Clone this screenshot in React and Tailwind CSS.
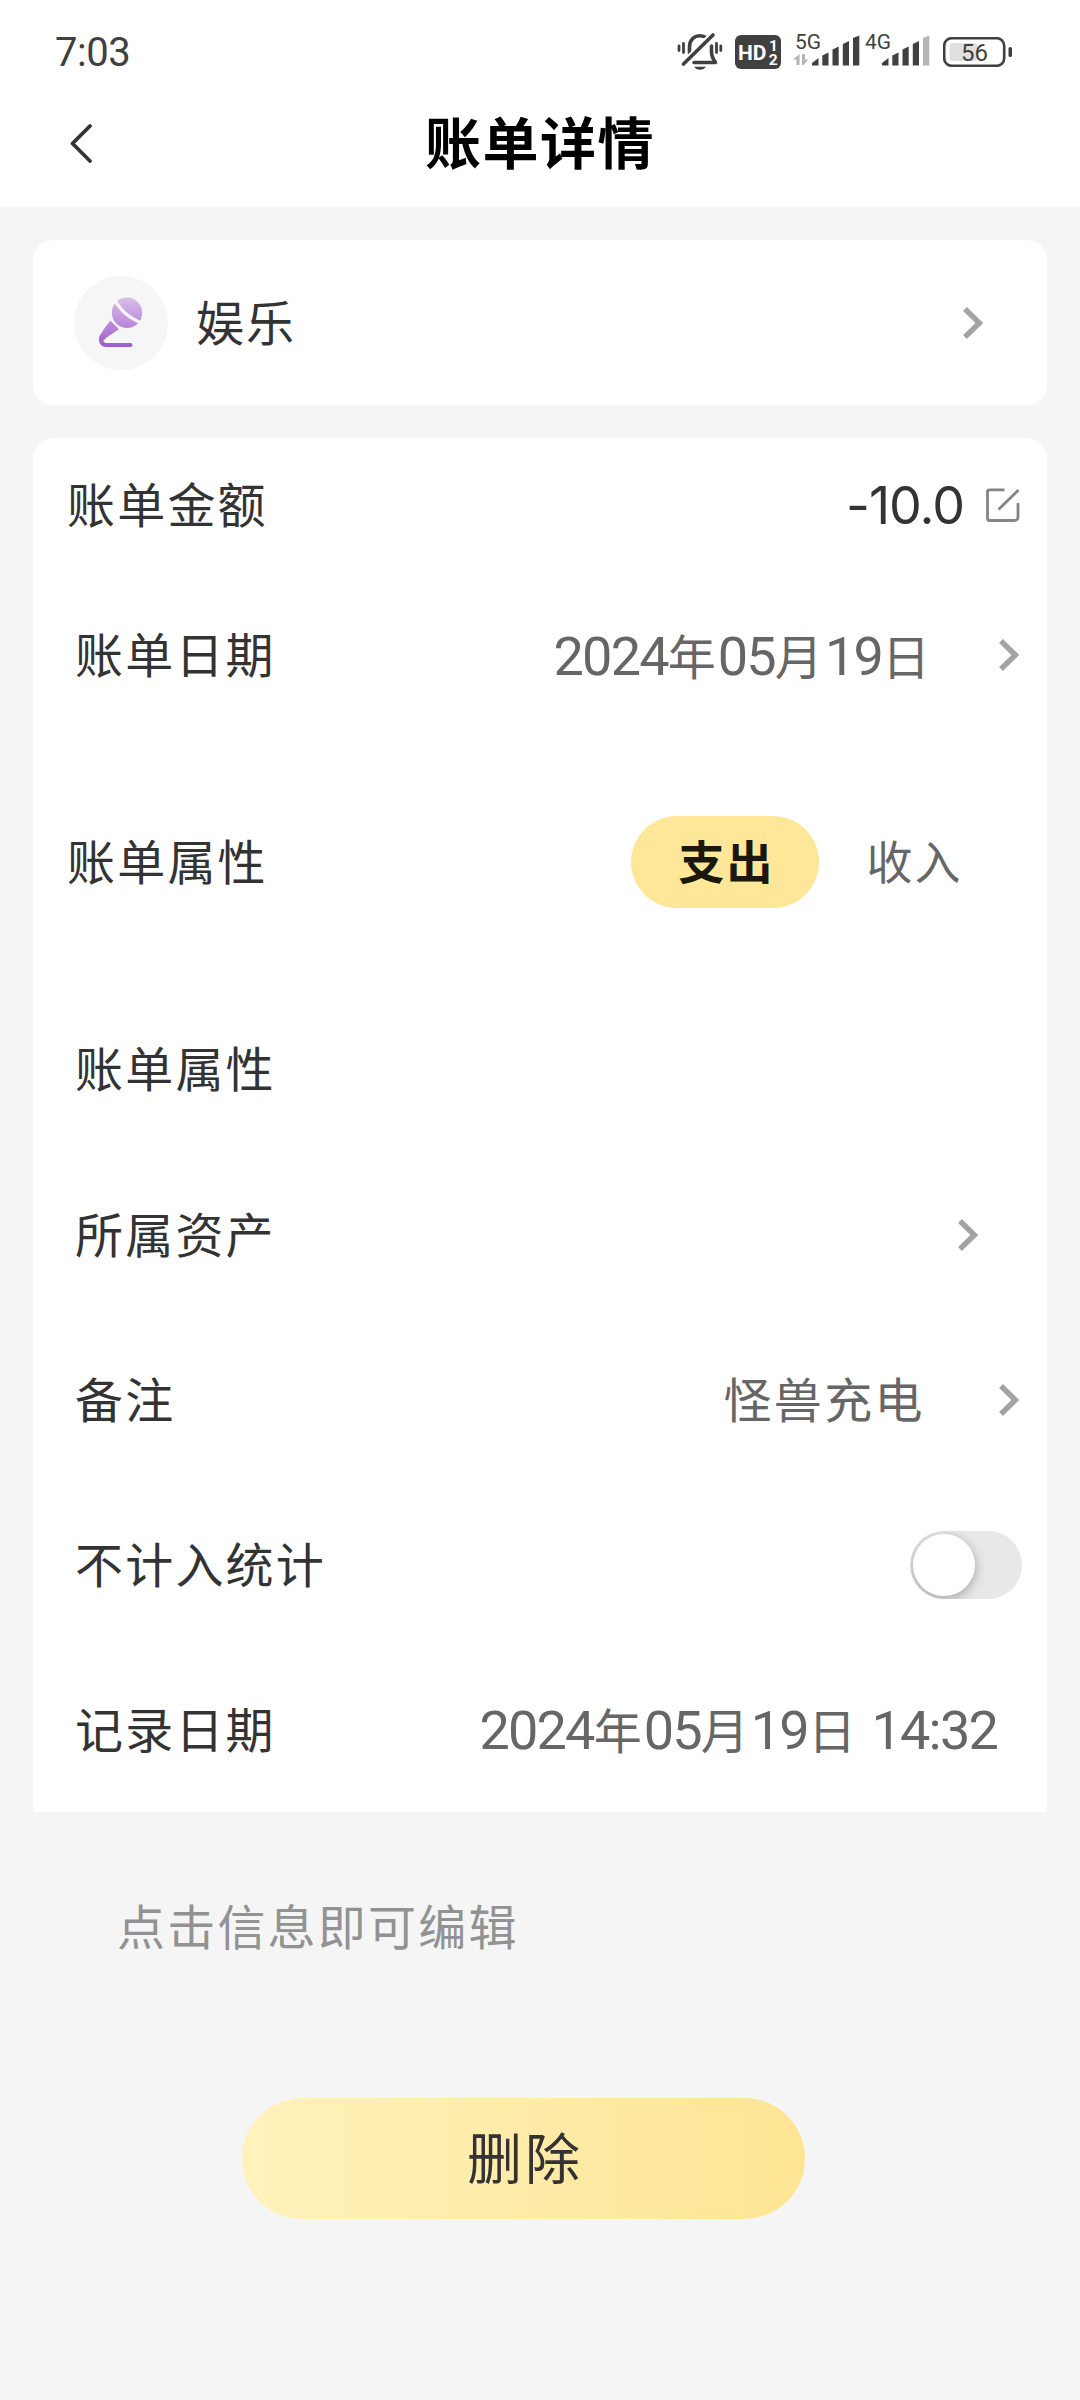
import { useState } from "react";

const NumText = ({ children, className = "" }) => (
    <span className={`font-['Roboto','Noto_Sans_CJK_SC',sans-serif] text-[54px] tracking-[-1.8px] ${className}`}>
        {children}
    </span>
);

const DateText = ({ year, month, day, time }) => (
    <span className="flex items-baseline whitespace-pre pt-[3px] leading-none text-[#666666]">
        <NumText>{year}</NumText>
        <span>年</span>
        <NumText>{month}</NumText>
        <span>月</span>
        <NumText>{day}</NumText>
        <span>日</span>
        {time && <NumText className="pl-[2px]">{` ${time}`}</NumText>}
    </span>
);

const Chevron = ({ className = "" }) => (
    <svg className={`h-8 w-5 shrink-0 ${className}`} viewBox="0 0 20 32" fill="none">
        <path d="M2 2 L16.300 16 L2 30" stroke="#a3a3a3" strokeWidth="5.400" />
    </svg>
);

const EditIcon = () => (
    <svg className="h-[34px] w-[34px] shrink-0" viewBox="0 0 34 34" fill="none" stroke="#858585" strokeWidth="2.800">
        <path d="M18.500 1.800 H3.500 Q1.500 1.800 1.500 3.800 V30.500 Q1.500 32.500 3.500 32.500 H28 Q32 32.500 32 28.500 V15" />
        <path d="M12.500 21.500 L32.500 2" />
    </svg>
);

const MicIcon = () => (
    <svg className="h-[94px] w-[94px] shrink-0" viewBox="0 0 94 94" fill="none">
        <defs>
            <linearGradient id="mic" x1="0" y1="21" x2="0" y2="71" gradientUnits="userSpaceOnUse">
                <stop offset="0" stopColor="#d9bfe9" />
                <stop offset="0.5" stopColor="#be8fdc" />
                <stop offset="1" stopColor="#a05cc6" />
            </linearGradient>
        </defs>
        <circle cx="47" cy="47" r="47" fill="#f6f6f7" />
        <circle cx="53" cy="36.800" r="15.200" fill="url(#mic)" />
        <path d="M41 24 Q49 40 69 47.500" stroke="#f6f6f7" strokeWidth="3.200" />
        <path d="M36.500 44.500 L45 53.300 L32.500 61.500 L28 66 L25.300 62.500 Q26 57 36.500 44.500 Z" fill="url(#mic)" />
        <path d="M27.600 60 C25.500 64.500 28 69 32.500 69 H56.500" stroke="url(#mic)" strokeWidth="4" strokeLinecap="round" />
    </svg>
);

const MutedBell = () => (
    <svg className="h-[40px] w-[46px]" viewBox="0 0 46 40" fill="none" stroke="#404040" strokeWidth="3.600" strokeLinecap="round">
        <path d="M12.500 21 V15 C12.500 8 17 3.800 23 3.800 C26 3.800 28 4.600 30 6" />
        <path d="M34.500 14 V20 C34.500 25 36 27 38.500 30.500 H17" strokeLinejoin="round" />
        <path d="M36 3 L7 32" stroke="#ffffff" strokeWidth="8" strokeLinecap="butt" />
        <path d="M36 3 L6.500 32" />
        <path d="M17 34.800 H29 Q27 37.800 23 37.800 Q19 37.800 17 34.800 Z" fill="#404040" stroke="none" />
        <path d="M6.500 11.500 V20.500 M2 14 V18.500 M39.500 11.500 V20.500 M43.800 14 V18.500" strokeWidth="2.800" />
    </svg>
);

const SignalBars = ({ label, weak, data }) => (
    <svg className="h-[48px] w-[68px]" viewBox="0 -4 68 48" fill="#404040">
        <text x="2" y="17.200" fontSize="21" fontFamily="Roboto, sans-serif">{label}</text>
        {data && <path d="M0 27.500 L6.500 22 V33 H3.500 V27.500 Z M9 22 H12 V27.500 H15.500 L10.500 33 H9 Z" fill="#b5b5b5" />}
        <path d="M19 33.500 V31 L25.500 26 V33.500 Z" />
        <path d="M29.300 33.500 V23.500 L35.500 20.500 V33.500 Z" />
        <path d="M39.500 33.500 V17.500 L45.700 14.500 V33.500 Z" />
        <path d="M49.800 33.500 V12 L56 9 V33.500 Z" />
        <path d="M60 33.500 V6 L66.300 3.500 V33.500 Z" fill={weak ? "#b5b5b5" : "#404040"} />
    </svg>
);

const HdBadge = () => (
    <svg className="h-[34px] w-[46px]" viewBox="0 0 46 34" fill="#ffffff" fontFamily="Roboto, sans-serif" fontWeight="700">
        <rect width="46" height="34" rx="6" fill="#404040" />
        <text x="3" y="24.500" fontSize="21">HD</text>
        <text x="34" y="16" fontSize="15.500">1</text>
        <text x="33.800" y="30" fontSize="15.500">2</text>
    </svg>
);

const Battery = ({ level }) => (
    <svg className="h-[30px] w-[70px]" viewBox="0 0 70 30" fill="none">
        <rect x="1.200" y="1.200" width="60" height="27.600" rx="7.500" stroke="#404040" strokeWidth="2.600" />
        <rect x="6.500" y="6" width="28" height="18" rx="3" fill="#e0e0e0" />
        <rect x="65.500" y="10" width="3.500" height="10" rx="1.500" fill="#404040" />
        <text x="18" y="23.500" fontSize="24" fontFamily="Roboto, sans-serif" fill="#404040">{level}</text>
    </svg>
);

const StatusBar = () => (
    <div className="flex h-[104px] items-center pl-[55px] tracking-normal text-[#404040]">
        <span className="pt-[2px] font-['Roboto',sans-serif] text-[40px] leading-none tracking-[-0.5px]">7:03</span>
        <div className="ml-auto flex items-center pr-[67px]">
            <MutedBell />
            <div className="ml-[12px]"><HdBadge /></div>
            <div className="ml-[12px]"><SignalBars label="5G" data /></div>
            <div className="ml-[2px]"><SignalBars label="4G" weak /></div>
            <div className="ml-[12px]"><Battery level="56" /></div>
        </div>
    </div>
);

const Row = ({ label, indent, height = "h-[165px]", right = "pr-[28px]", children }) => (
    <div className={`flex items-center ${height} ${right} ${indent ? "pl-[42px]" : "pl-[34px]"}`}>
        <span className="pb-[6px] leading-none tracking-[2.2px]">{label}</span>
        <div className="ml-auto flex items-center">{children}</div>
    </div>
);

const App = () => {
    const [type, setType] = useState("支出");
    const [excluded, setExcluded] = useState(false);

    return (
        <div className="h-[2400px] w-[1080px] overflow-hidden bg-[#f5f5f5] font-['Noto_Sans_CJK_SC',sans-serif] text-[48px] tracking-[2px] text-[#333333]">
            <header className="h-[207px] bg-white">
                <StatusBar />
                <div className="grid h-[78px] grid-cols-[425px_1fr_425px] items-center">
                    <svg className="ml-[69px] h-10 w-6" viewBox="0 0 24 40" fill="none">
                        <path d="M21 3 L3.500 20.500 L21 38" stroke="#333333" strokeWidth="3.800" strokeLinecap="round" strokeLinejoin="round" />
                    </svg>
                    <h1 className="whitespace-nowrap pb-[7px] text-[56px] font-bold leading-none tracking-[1.5px] text-black">账单详情</h1>
                </div>
            </header>

            <main className="pl-[33px] pr-[33px] pt-[33px]">
                <section className="flex h-[165px] items-center rounded-[20px] bg-white pl-[41px] pr-[64px]">
                    <MicIcon />
                    <span className="ml-[28px] pb-[6px] leading-none">娱乐</span>
                    <Chevron className="ml-auto" />
                </section>

                <section className="mt-[33px] rounded-t-[20px] bg-white">
                    <Row label="账单金额" height="h-[134px]" right="pr-[27px]">
                        <span className="mr-[22px] pt-[2px] font-['Inter',sans-serif] text-[52px] leading-none tracking-[-1px]">-10.0</span>
                        <EditIcon />
                    </Row>
                    <Row label="账单日期" indent height="h-[166px]">
                        <DateText year="2024" month="05" day="19" />
                        <Chevron className="ml-[67px]" />
                    </Row>
                    <Row label="账单属性" height="h-[248px]" right="pr-[40px]">
                        {["支出", "收入"].map((item) => (
                            <button
                                key={item}
                                onClick={() => setType(item)}
                                className={`h-[92px] w-[188px] rounded-full pb-[6px] pl-[3px] text-[46px] leading-none ${
                                    type === item ? "bg-[#fee798] font-bold text-[#1a170d]" : "text-[#666666]"
                                }`}
                            >
                                {item}
                            </button>
                        ))}
                    </Row>
                    <Row label="账单属性" indent height="h-[166px]" />
                    <Row label="所属资产" indent right="pr-[69px]">
                        <Chevron />
                    </Row>
                    <Row label="备注" indent>
                        <span className="pb-[6px] leading-none tracking-[2.4px] text-[#666666]">怪兽充电</span>
                        <Chevron className="ml-[74px]" />
                    </Row>
                    <Row label="不计入统计" indent right="pr-[25px]">
                        <button
                            onClick={() => setExcluded(!excluded)}
                            className={`flex h-[68px] w-[112px] items-center overflow-hidden rounded-full bg-[#e8e8e8] px-[3px] ${excluded ? "justify-end" : ""}`}
                        >
                            <span className="h-[62px] w-[62px] rounded-full bg-white shadow-[0_3px_12px_rgba(0,0,0,0.3)]" />
                        </button>
                    </Row>
                    <Row label="记录日期" indent right="pr-[50px]">
                        <DateText year="2024" month="05" day="19" time="14:32" />
                    </Row>
                </section>

                <p className="mt-[88px] pl-[84px] leading-none tracking-[2.2px] text-[#929292]">点击信息即可编辑</p>

                <button className="ml-[209px] mt-[150px] flex h-[121px] w-[563px] items-center justify-center rounded-full bg-linear-to-r from-[#fff2bb] to-[#fee594] pb-[6px] pl-[3px] text-[55px] leading-none tracking-[3px]">
                    删除
                </button>
            </main>
        </div>
    );
};

export default App;
